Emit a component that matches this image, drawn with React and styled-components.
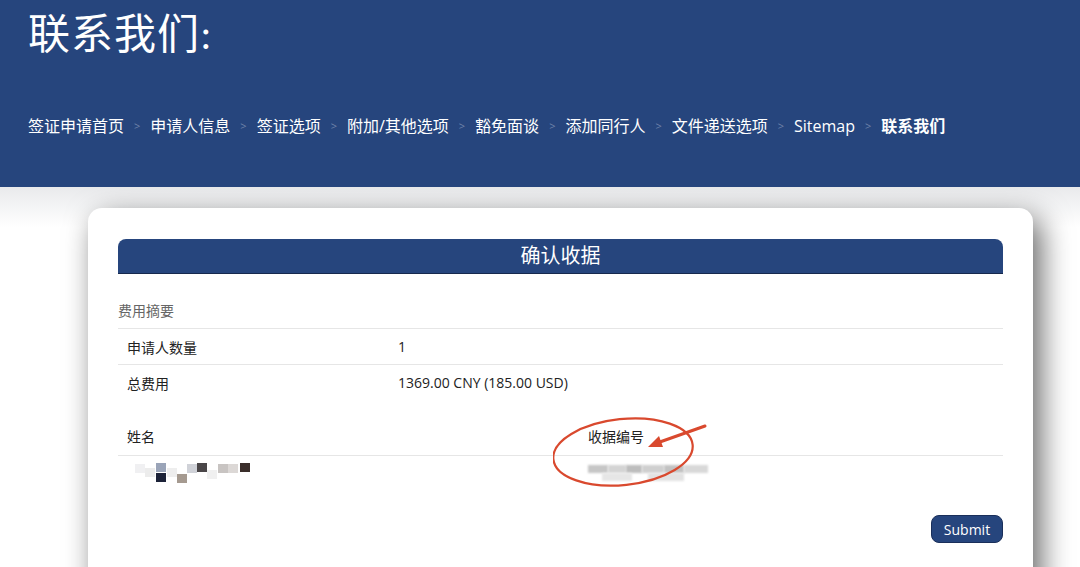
import React from 'react';
import styled, { createGlobalStyle } from 'styled-components';

const GlobalStyle = createGlobalStyle`
  body {
    margin: 0;
    background: #ffffff;
    font-family: "Open Sans", "Noto Sans CJK SC", sans-serif;
    color: #222;
  }
`;

const crumbs = ['签证申请首页', '申请人信息', '签证选项', '附加/其他选项', '豁免面谈', '添加同行人', '文件递送选项', 'Sitemap'];

// mosaic blocks standing in for the blurred name
const nameBlocks = [
  [8, 2, '#f0f0f2'], [18, 6, '#ececec'], [29, 1, '#9aa4b8'], [29, 11, '#1c2238'],
  [40, 6, '#eeeeee'], [50, 12, '#a59a90'], [60, 2, '#d0d2d8'], [70, 1, '#4a4648'],
  [80, 8, '#f0f0f0'], [91, 2, '#c8c4c2'], [101, 2, '#dcd8d6'], [113, 1, '#3a2e2a'],
];

const receiptBlocks = [
  [0, 3, 20, '#c6c6c6'], [20, 3, 18, '#d4d4d4'], [38, 3, 16, '#bdbdbd'], [54, 3, 22, '#cfcfcf'],
  [76, 3, 20, '#c2c2c2'], [96, 3, 24, '#d8d8d8'], [14, 11, 30, '#e6e6e6'], [60, 11, 36, '#e2e2e2'],
];

const App = () => {
  return (
    <>
      <GlobalStyle />
      <Header>
        <Title>联系我们:</Title>
        <Crumbs>
          {crumbs.map((c) => (
            <React.Fragment key={c}>
              <Crumb>{c}</Crumb>
              <Sep>&gt;</Sep>
            </React.Fragment>
          ))}
          <Crumb active>联系我们</Crumb>
        </Crumbs>
      </Header>

      <Page>
        <Card>
          <PanelBar>确认收据</PanelBar>

          <SectionLabel>费用摘要</SectionLabel>
          <Table>
            <Row>
              <Cell>申请人数量</Cell>
              <Cell>1</Cell>
            </Row>
            <Row>
              <Cell>总费用</Cell>
              <Cell>1369.00 CNY (185.00 USD)</Cell>
            </Row>
          </Table>

          <NameTable>
            <HeadRow>
              <Cell>姓名</Cell>
              <Cell>收据编号</Cell>
            </HeadRow>
            <DataRow>
              <Cell>
                <Mosaic>
                  {nameBlocks.map(([x, y, c], i) => (
                    <Block key={i} style={{ left: x, top: y, background: c }} />
                  ))}
                </Mosaic>
              </Cell>
              <Cell>
                <Mosaic>
                  {receiptBlocks.map(([x, y, w, c], i) => (
                    <Smear key={i} style={{ left: x, top: y, width: w, background: c }} />
                  ))}
                </Mosaic>
              </Cell>
            </DataRow>
          </NameTable>

          <Actions>
            <SubmitButton>Submit</SubmitButton>
          </Actions>

          <Annotation width="170" height="90" viewBox="0 0 170 90">
            <ellipse cx="70" cy="46" rx="70" ry="33" transform="rotate(-6 70 46)" fill="none" stroke="#d9492e" strokeWidth="2.2" />
            <line x1="152" y1="20" x2="104" y2="37" stroke="#d9492e" strokeWidth="3" strokeLinecap="round" />
            <polygon points="95,41 106,30 110,41" fill="#d9492e" />
          </Annotation>
        </Card>
      </Page>
    </>
  );
};

export default App;

const Header = styled.header`
  background: #26457d;
  height: 187px;
  padding: 0 28px;
  box-sizing: border-box;
  color: #fff;
`;

const Title = styled.h1`
  margin: 0;
  padding-top: 6px;
  font-family: "Liberation Serif", "Noto Sans CJK SC", serif;
  font-weight: 400;
  font-size: 42px;
  line-height: 58px;
  letter-spacing: 1px;
`;

const Crumbs = styled.nav`
  display: flex;
  align-items: center;
  margin-top: 50px;
  font-size: 16px;
  line-height: 24px;
`;

const Crumb = styled.span`
  color: #fff;
  font-weight: ${(p) => (p.active ? 700 : 400)};
`;

const Sep = styled.span`
  color: #6f83aa;
  font-size: 11px;
  margin: 0 10px;
`;

const Page = styled.main`
  padding: 21px 47px 0 88px;
  overflow: hidden;
  height: 380px;
  box-sizing: border-box;
  background: linear-gradient(#e9eaec, #ffffff 40px);
`;

const Card = styled.section`
  position: relative;
  width: 945px;
  height: 420px;
  box-sizing: border-box;
  padding: 31px 30px 0;
  background: #fff;
  border-radius: 14px;
  box-shadow: 8px 10px 30px rgba(0, 0, 0, 0.6);
`;

const PanelBar = styled.div`
  height: 35px;
  background: #26457d;
  border-radius: 8px 8px 0 0;
  border-bottom: 1px solid #16294d;
  box-sizing: border-box;
  color: #fff;
  font-size: 20px;
  line-height: 34px;
  text-align: center;
`;

const SectionLabel = styled.div`
  margin-top: 27px;
  font-size: 14px;
  line-height: 20px;
  color: #666;
  padding-bottom: 7px;
  border-bottom: 1px solid #e6e6e6;
`;

const Table = styled.div`
  display: flex;
  flex-direction: column;
`;

const Row = styled.div`
  display: grid;
  grid-template-columns: 271px 1fr;
  height: 35px;
  align-items: center;
  font-size: 14px;
  & + & {
    border-top: 1px solid #e6e6e6;
  }
`;

const Cell = styled.div`
  padding-left: 9px;
  color: #222;
`;

const NameTable = styled.div`
  margin-top: 17px;
`;

const HeadRow = styled.div`
  display: grid;
  grid-template-columns: 461px 1fr;
  height: 38px;
  align-items: center;
  font-size: 14px;
  border-bottom: 1px solid #e6e6e6;
`;

const DataRow = styled.div`
  display: grid;
  grid-template-columns: 461px 1fr;
  height: 30px;
  padding-top: 6px;
  box-sizing: border-box;
  align-items: start;
  font-size: 14px;
`;

const Mosaic = styled.div`
  position: relative;
  height: 22px;
  width: 130px;
`;

const Block = styled.span`
  position: absolute;
  width: 10px;
  height: 9px;
`;

const Smear = styled.span`
  position: absolute;
  height: 8px;
  filter: blur(1px);
`;

const Actions = styled.div`
  display: flex;
  justify-content: flex-end;
  margin-top: 29px;
`;

const SubmitButton = styled.button`
  width: 72px;
  height: 28px;
  background: #26457d;
  border: 1px solid #1a2f5a;
  border-radius: 8px;
  color: #fff;
  font-family: "Open Sans", sans-serif;
  font-size: 14px;
  cursor: pointer;
`;

const Annotation = styled.svg`
  position: absolute;
  left: 465px;
  top: 198px;
  pointer-events: none;
`;
